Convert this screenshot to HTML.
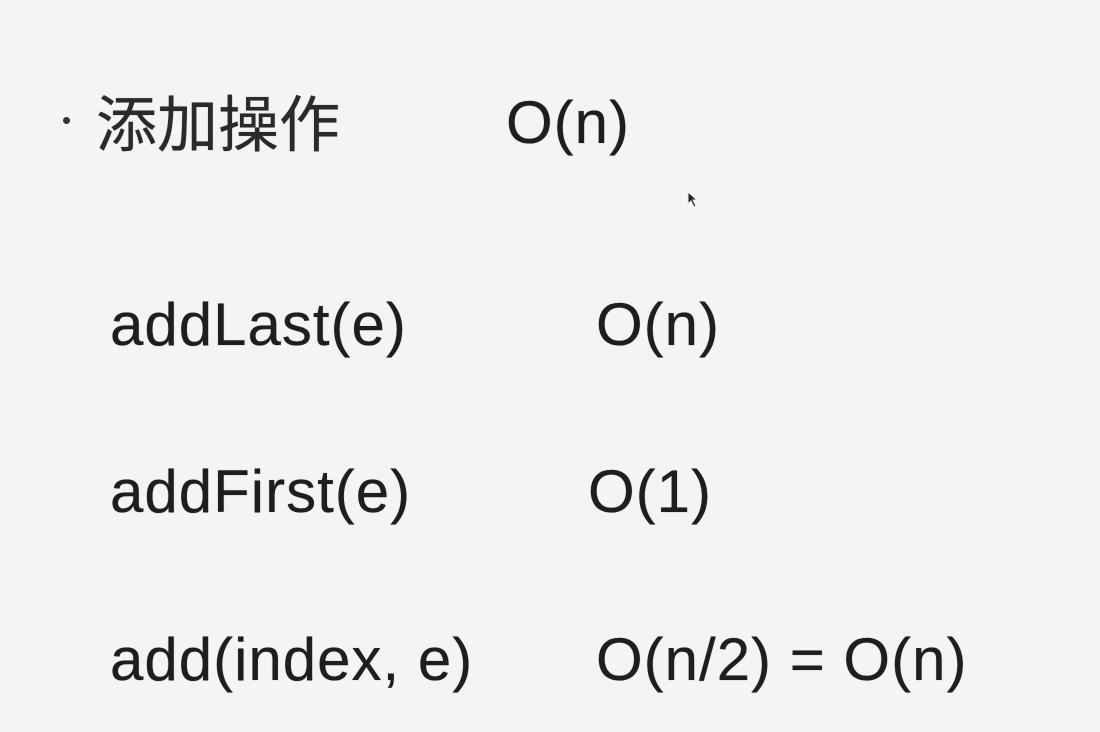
<!DOCTYPE html>
<html><head><meta charset="utf-8"><style>
html,body{margin:0;padding:0}
body{width:1100px;height:732px;background:#f4f4f4;position:relative;overflow:hidden;font-family:"Liberation Sans","Noto Sans CJK SC",sans-serif;color:#1e1e1e}
.t{position:absolute;font-size:60px;line-height:1;white-space:nowrap;letter-spacing:1px;text-shadow:0 0 0.6px #1e1e1e}
.c{font-family:"Noto Sans CJK SC",sans-serif;font-size:61px;color:#2a2a2a;letter-spacing:0}
</style></head><body>
<div style="position:absolute;left:63px;top:117px;width:7px;height:7px;border-radius:50%;background:#333"></div>
<div class="t c" style="left:96px;top:86px;line-height:1.1">添加操作</div>
<div class="t" style="left:506px;top:93px">O(n)</div>
<svg style="position:absolute;left:686px;top:190px" width="14" height="20" viewBox="0 0 14 20"><path d="M2 2 L2 14 L5 11 L8 17 L10 16 L7 10 L11 10 Z" fill="#222" stroke="#eee" stroke-width="1"/></svg>
<div class="t" style="left:110px;top:295px">addLast(e)</div>
<div class="t" style="left:596px;top:295px">O(n)</div>
<div class="t" style="left:110px;top:462px">addFirst(e)</div>
<div class="t" style="left:588px;top:462px">O(1)</div>
<div class="t" style="left:110px;top:630px">add(index, e)</div>
<div class="t" style="left:596px;top:630px">O(n/2) = O(n)</div>
</body></html>
